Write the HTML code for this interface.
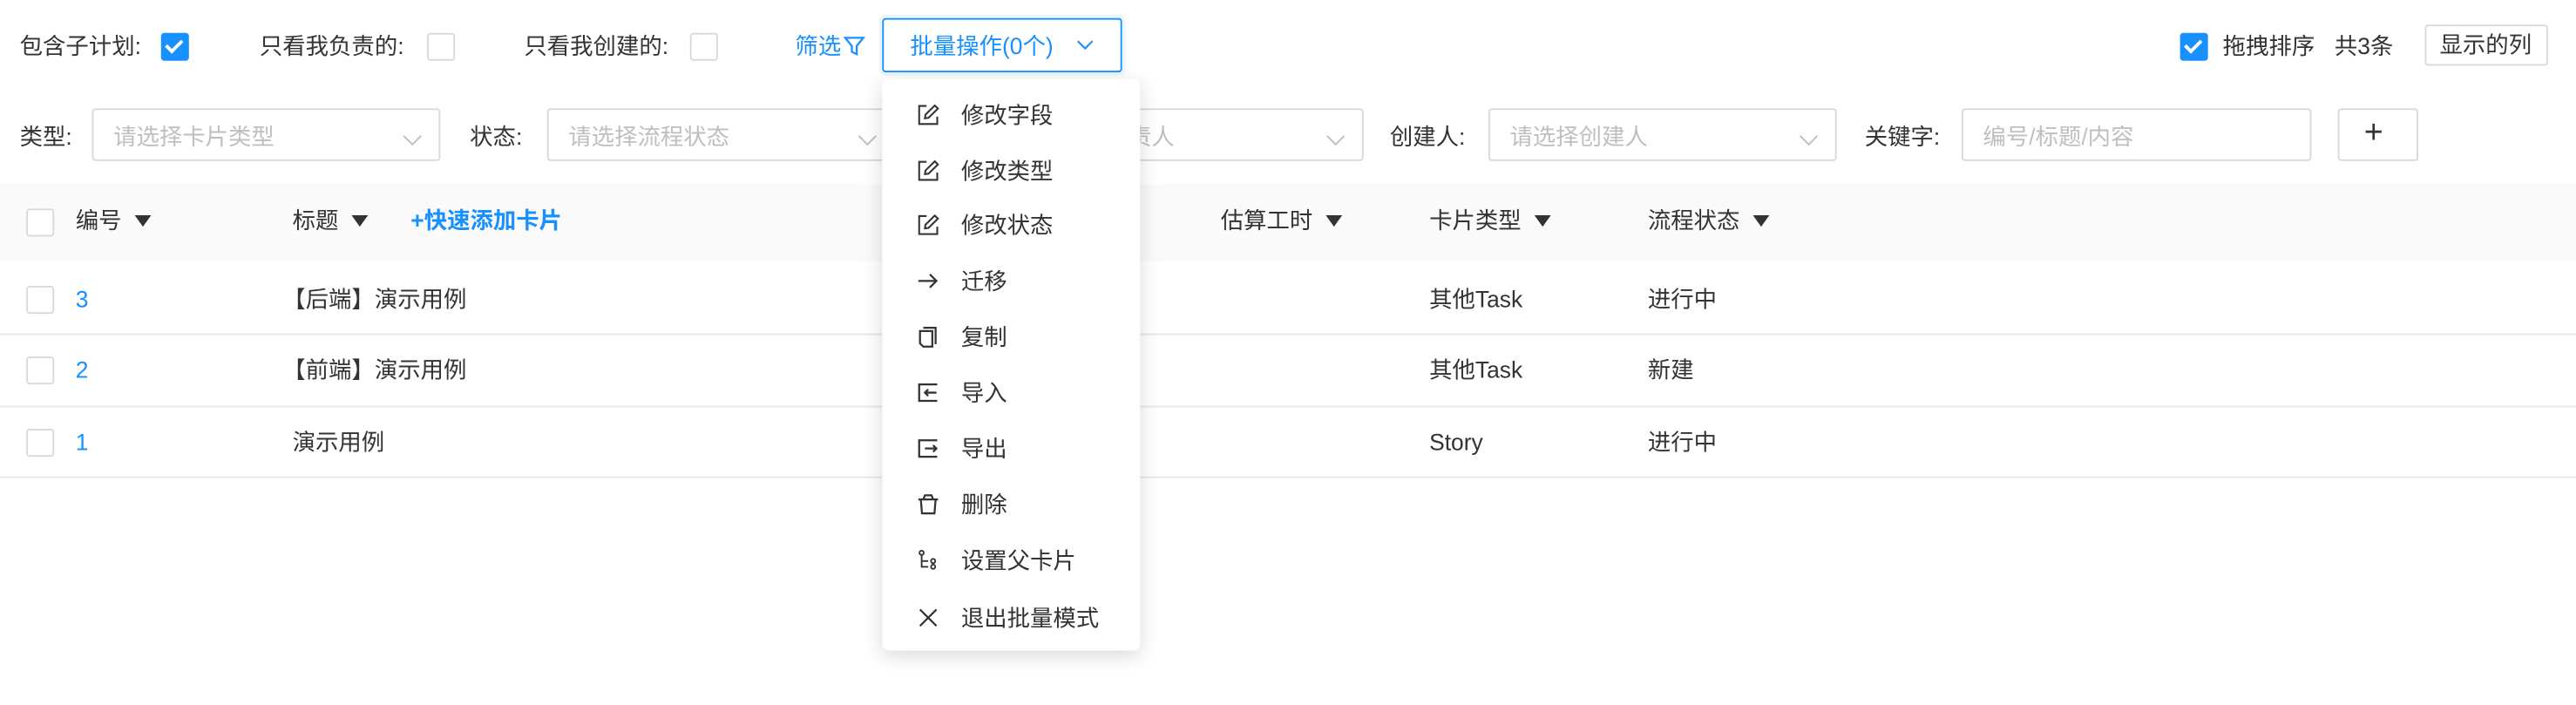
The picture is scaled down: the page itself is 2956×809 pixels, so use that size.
<!DOCTYPE html>
<html><head><meta charset="utf-8"><style>
html,body{margin:0;padding:0;background:#fff;overflow:hidden}
body{width:2956px;height:808px}
#w{position:absolute;left:0;top:0;width:1568px;height:429px;transform:scale(1.88520);transform-origin:0 0;font-family:"Liberation Sans","Noto Sans CJK SC",sans-serif;font-size:14px;color:#333}
.a{position:absolute;white-space:nowrap;line-height:20px}
.cb{position:absolute;width:15px;height:15px;border:1px solid #d9d9d9;border-radius:2px;background:#fff}
.cb.on{background:#1890ff;border-color:#1890ff}
.cb.on:after{content:"";position:absolute;left:4px;top:1px;width:4px;height:8px;border:solid #fff;border-width:0 2px 2px 0;transform:rotate(45deg)}
.inp{position:absolute;height:32px;border:1px solid #d9d9d9;border-radius:2px;background:#fff;box-sizing:border-box}
.ph{position:absolute;left:12px;top:6px;color:#bfbfbf;white-space:nowrap}
.arr{position:absolute;right:12px;top:12px;width:7px;height:7px;border:solid #bfbfbf;border-width:0 1px 1px 0;transform:rotate(45deg)}
.blue{color:#1890ff}
.tri{display:inline-block;width:0;height:0;border-left:5px solid transparent;border-right:5px solid transparent;border-top:7px solid #333;margin-left:8px;vertical-align:1px}
.line{position:absolute;left:0;width:1568px;height:1px;background:#e8e8e8}
.menu{position:absolute;left:537px;top:48px;width:157px;height:348px;background:#fff;border-radius:4px;box-shadow:0 3px 12px rgba(0,0,0,.15)}
.mi{position:absolute;left:21px;height:20px;line-height:20px;white-space:nowrap}
.mi svg{position:absolute;left:0;top:3px}
.mi span{position:absolute;left:27px}
</style></head><body><div id="w">
<div class="a" style="left:12px;top:18px">包含子计划:</div><div class="cb on" style="left:98px;top:20px"></div>
<div class="a" style="left:158px;top:18px">只看我负责的:</div><div class="cb" style="left:260px;top:20px"></div>
<div class="a" style="left:319px;top:18px">只看我创建的:</div><div class="cb" style="left:420px;top:20px"></div>
<div class="a blue" style="left:484px;top:18px">筛选<svg width="14" height="14" viewBox="0 0 14 14" style="vertical-align:-2px;margin-left:1px"><path d="M1.5 2h11l-4 5v5l-3-1.5V7z" fill="none" stroke="#1890ff" stroke-width="1.2"/></svg></div>
<div style="position:absolute;left:537px;top:11px;width:146px;height:33px;box-sizing:border-box;border:1px solid #1890ff;border-radius:2px;box-shadow:0 0 0 2px rgba(24,144,255,.08)"></div>
<div class="a blue" style="left:554px;top:18px">批量操作(0个)</div>
<svg style="position:absolute;left:655px;top:24px" width="11" height="7" viewBox="0 0 11 7"><path d="M1 1l4.5 4.5L10 1" fill="none" stroke="#1890ff" stroke-width="1.1"/></svg>
<div class="cb on" style="left:1327px;top:20px"></div>
<div class="a" style="left:1353px;top:18px">拖拽排序</div>
<div class="a" style="left:1421px;top:18px">共3条</div>
<div style="position:absolute;left:1476px;top:15px;width:75px;height:25px;box-sizing:border-box;border:1px solid #d9d9d9;border-radius:2px"></div>
<div class="a" style="left:1485px;top:17px">显示的列</div>

<div class="a" style="left:12px;top:73px">类型:</div>
<div class="inp" style="left:56px;top:66px;width:212px"><div class="ph">请选择卡片类型</div><div class="arr"></div></div>
<div class="a" style="left:286px;top:73px">状态:</div>
<div class="inp" style="left:333px;top:66px;width:212px"><div class="ph">请选择流程状态</div><div class="arr"></div></div>
<div class="a" style="left:563px;top:73px">负责人:</div>
<div class="inp" style="left:618px;top:66px;width:212px"><div class="ph">请选择负责人</div><div class="arr"></div></div>
<div class="a" style="left:846px;top:73px">创建人:</div>
<div class="inp" style="left:906px;top:66px;width:212px"><div class="ph">请选择创建人</div><div class="arr"></div></div>
<div class="a" style="left:1135px;top:73px">关键字:</div>
<div class="inp" style="left:1194px;top:66px;width:213px"><div class="ph">编号/标题/内容</div></div>
<div class="inp" style="left:1423px;top:66px;width:49px"></div>
<div class="a" style="left:1439px;top:71px;font-size:20px;font-weight:300">+</div>

<div style="position:absolute;left:0;top:112px;width:1568px;height:47px;background:#fafafa"></div>
<div class="cb" style="left:16px;top:127px"></div>
<div class="a" style="left:46px;top:124px">编号<i class="tri"></i></div>
<div class="a" style="left:178px;top:124px">标题<i class="tri"></i></div>
<div class="a blue" style="left:250px;top:124px;font-weight:bold">+快速添加卡片</div>
<div class="a" style="left:743px;top:124px">估算工时<i class="tri"></i></div>
<div class="a" style="left:870px;top:124px">卡片类型<i class="tri"></i></div>
<div class="a" style="left:1003px;top:124px">流程状态<i class="tri"></i></div>

<div class="cb" style="left:16px;top:174px"></div><div class="a blue" style="left:46px;top:172px">3</div>
<div class="a" style="left:172px;top:172px">【后端】演示用例</div><div class="a" style="left:870px;top:172px">其他Task</div><div class="a" style="left:1003px;top:172px">进行中</div>
<div class="line" style="top:203px"></div>
<div class="cb" style="left:16px;top:217px"></div><div class="a blue" style="left:46px;top:215px">2</div>
<div class="a" style="left:172px;top:215px">【前端】演示用例</div><div class="a" style="left:870px;top:215px">其他Task</div><div class="a" style="left:1003px;top:215px">新建</div>
<div class="line" style="top:247px"></div>
<div class="cb" style="left:16px;top:261px"></div><div class="a blue" style="left:46px;top:259px">1</div>
<div class="a" style="left:178px;top:259px">演示用例</div><div class="a" style="left:870px;top:259px">Story</div><div class="a" style="left:1003px;top:259px">进行中</div>
<div class="line" style="top:290px"></div>

<div class="menu">
<div class="mi" style="top:12px"><svg width="14" height="14" viewBox="0 0 14 14" fill="none" stroke="#333" stroke-width="1.1"><path d="M6 1.5H1.5v11h11V8"/><path d="M5 9l.3-2.2L11 1.2l1.9 1.9L7.2 8.7z"/></svg><span>修改字段</span></div>
<div class="mi" style="top:46px"><svg width="14" height="14" viewBox="0 0 14 14" fill="none" stroke="#333" stroke-width="1.1"><path d="M6 1.5H1.5v11h11V8"/><path d="M5 9l.3-2.2L11 1.2l1.9 1.9L7.2 8.7z"/></svg><span>修改类型</span></div>
<div class="mi" style="top:79px"><svg width="14" height="14" viewBox="0 0 14 14" fill="none" stroke="#333" stroke-width="1.1"><path d="M6 1.5H1.5v11h11V8"/><path d="M5 9l.3-2.2L11 1.2l1.9 1.9L7.2 8.7z"/></svg><span>修改状态</span></div>
<div class="mi" style="top:113px"><svg width="14" height="14" viewBox="0 0 14 14" fill="none" stroke="#333" stroke-width="1.2"><path d="M1 7h11M8 3l4 4-4 4"/></svg><span>迁移</span></div>
<div class="mi" style="top:147px"><svg width="14" height="14" viewBox="0 0 14 14" fill="none" stroke="#333" stroke-width="1.2"><path d="M4 1.5h7.5v10"/><path d="M2 3.5h7.5v9.5H4L2 11z"/></svg><span>复制</span></div>
<div class="mi" style="top:181px"><svg width="14" height="14" viewBox="0 0 14 14" fill="none" stroke="#333" stroke-width="1.2"><path d="M12.5 2H1.5v10h11"/><path d="M12 7H5M7 5L5 7l2 2"/></svg><span>导入</span></div>
<div class="mi" style="top:215px"><svg width="14" height="14" viewBox="0 0 14 14" fill="none" stroke="#333" stroke-width="1.2"><path d="M12.5 2H1.5v10h11"/><path d="M5 7h7M10 5l2 2-2 2"/></svg><span>导出</span></div>
<div class="mi" style="top:249px"><svg width="14" height="14" viewBox="0 0 14 14" fill="none" stroke="#333" stroke-width="1.2"><path d="M1 4h12M4 4l1-2.5h4L10 4M2.5 4l.7 8.5h7.6L11.5 4"/></svg><span>删除</span></div>
<div class="mi" style="top:283px"><svg width="14" height="14" viewBox="0 0 14 14" fill="none" stroke="#333" stroke-width="1"><circle cx="3" cy="2.5" r="1.3"/><path d="M3 4v7h4M3 7.5h4"/><circle cx="10" cy="7.5" r="1.3"/><circle cx="10" cy="11" r="1.3"/></svg><span>设置父卡片</span></div>
<div class="mi" style="top:318px"><svg width="14" height="14" viewBox="0 0 14 14" fill="none" stroke="#333" stroke-width="1.2"><path d="M2 2l10 10M12 2L2 12"/></svg><span>退出批量模式</span></div>
</div>
</div></body></html>
